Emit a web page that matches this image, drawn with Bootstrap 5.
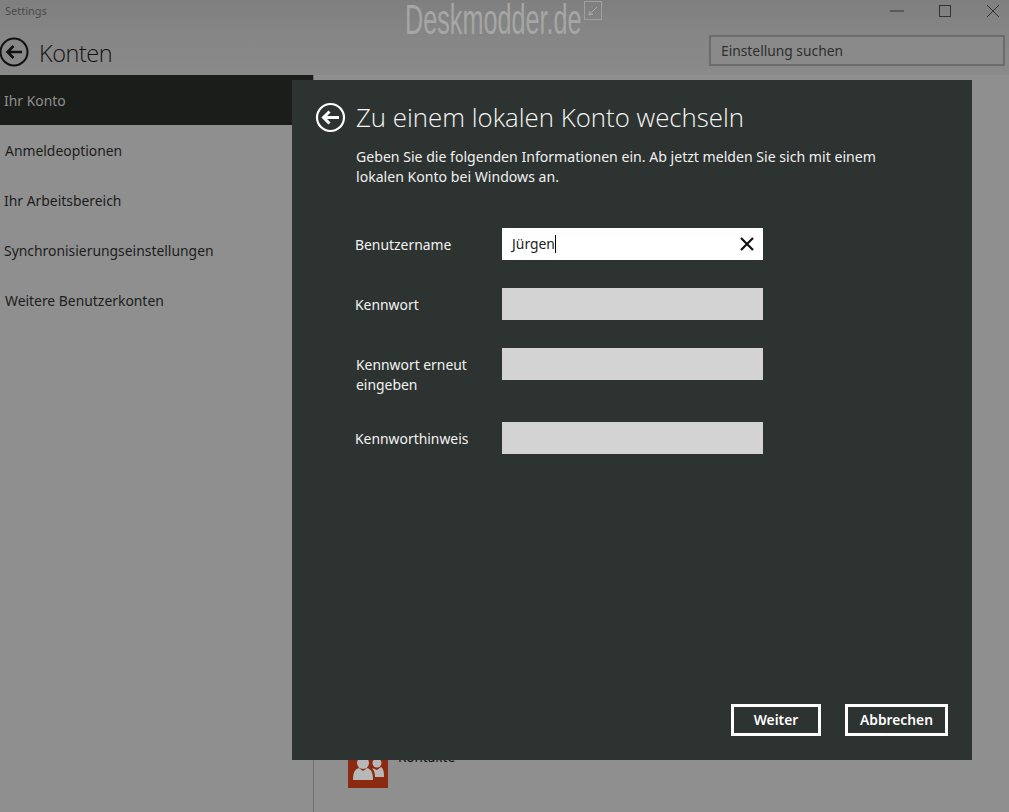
<!DOCTYPE html>
<html lang="de">
<head>
<meta charset="utf-8">
<title>Settings</title>
<link rel="stylesheet" href="https://cdn.jsdelivr.net/npm/bootstrap@5.3.0/dist/css/bootstrap.min.css">
<style>
html,body{height:812px;overflow:hidden}
body{background:#8f8f8f;font-family:"Noto Sans","Open Sans",sans-serif;color:#000;font-size:14px}
.app-shell{width:1009px;height:812px;position:relative;overflow:hidden}
.top-area{height:75px;background:linear-gradient(#7f7f7f,#858585 40%,#8a8a8a);position:relative}
.win-title{height:32px;font-size:11px;color:#4a4a4a;padding:3px 0 0 5px}
.brand-mark{font-family:"Liberation Sans",sans-serif;font-size:42px;line-height:40px;color:#a6a6a6;position:absolute;left:405px;top:0;transform:scaleX(.6);transform-origin:left top;white-space:nowrap}
.brand-box{position:absolute;left:584px;top:1px;width:18px;height:19px}
.win-controls svg{position:absolute;top:4px}
.head-row{height:43px}
.page-title{font-size:23.5px;font-weight:300;color:#111;line-height:1;margin:1px 0 0 10px;font-family:"Open Sans",sans-serif;letter-spacing:-.45px}
.back-dark{margin-top:-4px}
.search-box{width:296px;height:31px;border:2px solid #6c6c6c;padding-left:10px;font-size:13.8px;color:#2f2f2f;margin:-7px 4px 0 0;background:#8a8a8a;line-height:27px;white-space:nowrap}
.content-row{height:737px}
.side-col{width:313px;flex:none}
.side-item{height:50px;padding:1px 0 0 5px;color:#1c1c1c;font-size:13.9px;line-height:50px;display:block;white-space:nowrap}
.side-item.is-current{background:#1b1d1a;color:#8f8f8f;padding-left:4px}
.side-item.tight{padding-left:4px}
.main-col{border-left:1px solid #6f6f6f;position:relative;flex:1}
.tile-row{position:absolute;left:34px;top:673px}
.tile-icon{width:40px;height:40px;background:#8b2a10;display:block}
.tile-label{font-size:13.5px;color:#111;margin:0 0 0 10px;line-height:18px}
.dialog-panel{position:absolute;left:292px;top:80px;width:680px;height:680px;background:#2d3330;color:#fff;padding:21px 24px 24px 63px}
.dialog-head{height:32px;margin-left:-40px}
.dialog-head h1{font-size:25.8px;font-weight:300;font-family:"Open Sans",sans-serif;margin:0 0 0 10px;line-height:32px;color:#f5f5f5;white-space:nowrap}
.dialog-intro{font-size:14.1px;line-height:20px;margin:14px 0 0 1px;width:560px;color:#f0f0f0}
.form-rows{margin-top:41px}
.form-line{width:408px;display:flex;align-items:center;margin-bottom:28px;min-height:32px}
.form-line label{width:147px;flex:none;font-size:13.9px;line-height:20px;color:#f2f2f2;margin:1px 0 0}
.form-line.double{margin-bottom:42px;height:32px;align-items:flex-start}
.form-line.double label{margin:7px 0 0;padding-left:1px;height:40px}
.input-fake{width:261px;height:32px;background:#d3d3d3;flex:none}
.input-live{background:#fff;color:#222;display:flex;align-items:center;justify-content:space-between;padding:0 8px 0 10px;font-size:13.9px}
.caret-bar{display:inline-block;width:1px;height:18px;background:#000;vertical-align:-4px}
.btn-outline-win{border:3px solid #fff;border-radius:0;background:transparent;color:#fff;font-weight:600;font-size:13.8px;height:32px;padding:0;line-height:26px}
.btn-next{width:90px}
.btn-cancel{width:103px}
.dialog-actions{position:absolute;right:24px;bottom:24px;gap:24px}
</style>
</head>
<body>
<div class="app-shell">
  <div class="top-area">
    <div class="win-title">Settings</div>
    <span class="brand-mark">Deskmodder.de</span>
    <svg class="brand-box" viewBox="0 0 18 19"><rect x=".5" y=".5" width="17" height="18" fill="none" stroke="#a0a0a0"/><path d="M5 14L13 6M5 14l1-4M5 14l4-1" stroke="#a8a8a8" fill="none"/></svg>
    <div class="win-controls">
      <svg style="left:890px" width="14" height="14" viewBox="0 0 14 14"><path d="M0 7h14" stroke="#333"/></svg>
      <svg style="left:938px" width="14" height="14" viewBox="0 0 14 14"><rect x="1.500" y="1.500" width="11" height="11" fill="none" stroke="#333"/></svg>
      <svg style="left:986px" width="14" height="14" viewBox="0 0 14 14"><path d="M1 1l12 12M13 1L1 13" stroke="#333" fill="none"/></svg>
    </div>
    <div class="head-row d-flex align-items-center justify-content-between">
      <div class="d-flex align-items-center">
        <svg class="back-dark" width="29" height="30" viewBox="0 0 29 30"><circle cx="14" cy="15" r="13.500" fill="none" stroke="#111" stroke-width="2"/><path d="M22 15H8M13.500 9L7.500 15l6 6" fill="none" stroke="#111" stroke-width="2.600"/></svg>
        <h2 class="page-title">Konten</h2>
      </div>
      <div class="search-box">Einstellung suchen</div>
    </div>
  </div>
  <div class="content-row d-flex">
    <nav class="side-col">
      <span class="side-item is-current">Ihr Konto</span>
      <span class="side-item">Anmeldeoptionen</span>
      <span class="side-item tight">Ihr Arbeitsbereich</span>
      <span class="side-item tight">Synchronisierungseinstellungen</span>
      <span class="side-item">Weitere Benutzerkonten</span>
    </nav>
    <main class="main-col">
      <div class="tile-row d-flex">
        <svg class="tile-icon" viewBox="0 0 40 40"><rect width="40" height="40" fill="#8b2a10"/>
          <g fill="#b8b8b8"><circle cx="15" cy="15" r="6"/><path d="M5 32c0-8 2-11 6-12l4 3 4-3c4 1 6 4 6 12z"/><circle cx="29" cy="15" r="4.500"/><path d="M24 20l5 2 4-3c2 1 3 4 3 10H27c0-4-1-7-3-9z"/></g></svg>
        <span class="tile-label">Kontakte</span>
      </div>
    </main>
  </div>
  <div class="dialog-panel">
    <div class="dialog-head d-flex align-items-center">
      <svg width="31" height="31" viewBox="0 0 31 31"><circle cx="15.500" cy="15.500" r="13.500" fill="none" stroke="#fff" stroke-width="2.200"/><path d="M24 15.500H9M14.500 9.500l-6 6 6 6" fill="none" stroke="#fff" stroke-width="3"/></svg>
      <h1>Zu einem lokalen Konto wechseln</h1>
    </div>
    <p class="dialog-intro">Geben Sie die folgenden Informationen ein. Ab jetzt melden Sie sich mit einem lokalen Konto bei Windows an.</p>
    <div class="form-rows">
      <div class="form-line"><label>Benutzername</label>
        <div class="input-fake input-live"><span>Jürgen<span class="caret-bar"></span></span>
          <svg width="16" height="16" viewBox="0 0 16 16"><path d="M2 2l12 12M14 2L2 14" stroke="#111" stroke-width="2.200" fill="none"/></svg></div></div>
      <div class="form-line"><label>Kennwort</label><div class="input-fake"></div></div>
      <div class="form-line double"><label>Kennwort erneut eingeben</label><div class="input-fake"></div></div>
      <div class="form-line"><label>Kennworthinweis</label><div class="input-fake"></div></div>
    </div>
    <div class="dialog-actions d-flex">
      <button class="btn btn-outline-win btn-next">Weiter</button>
      <button class="btn btn-outline-win btn-cancel">Abbrechen</button>
    </div>
  </div>
</div>
<script src="https://cdn.jsdelivr.net/npm/bootstrap@5.3.0/dist/js/bootstrap.bundle.min.js"></script>
</body>
</html>
